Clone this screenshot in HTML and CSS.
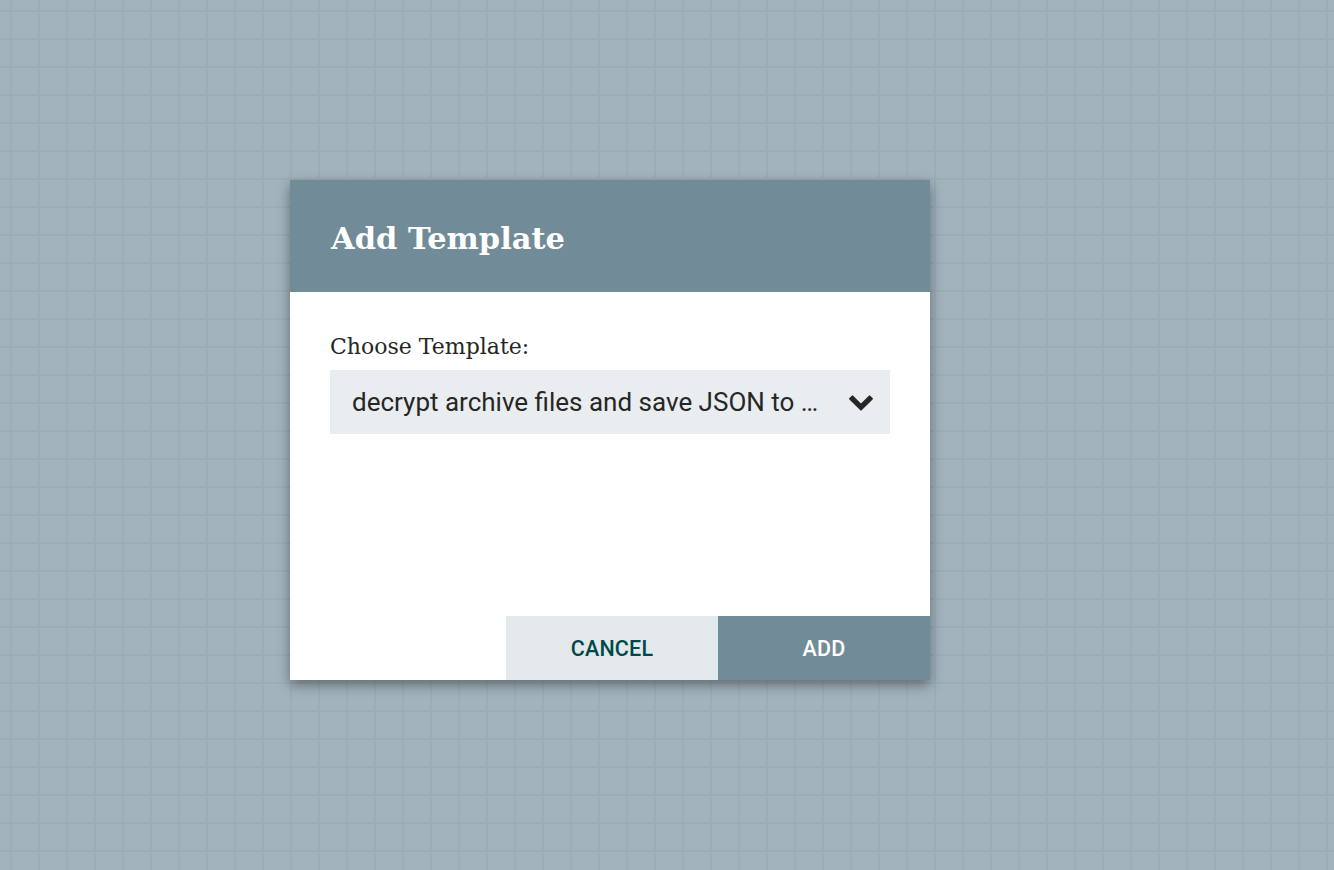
FILE: index.html
```html
<!DOCTYPE html>
<html>
<head>
<meta charset="utf-8">
<link rel="stylesheet" href="styles.css">
</head>
<body>
<div class="canvas">
  <div class="dialog">
    <div class="dialog-header">Add Template</div>
    <div class="dialog-body">
      <div class="label">Choose Template:</div>
      <div class="combo">
        <span class="combo-text">decrypt archive files and save JSON to …</span>
        <svg class="chevron" width="24" height="16" viewBox="83 520 1626 1062"><path fill="#262626" d="M1683 808l-742 741q-19 19-45 19t-45-19l-742-741q-19-19-19-45.5t19-45.5l166-165q19-19 45-19t45 19l531 531 531-531q19-19 45-19t45 19l166 165q19 19 19 45.5t-19 45.5z"/></svg>
      </div>
    </div>
    <div class="dialog-footer">
      <button class="btn btn-cancel">CANCEL</button>
      <button class="btn btn-add">ADD</button>
    </div>
  </div>
</div>
</body>
</html>
```
FILE: styles.css
```css
html, body {
  margin: 0;
  padding: 0;
}
body {
  width: 1334px;
  height: 870px;
  overflow: hidden;
}
.canvas {
  width: 1334px;
  height: 870px;
  background-color: #a2b3bc;
  background-image:
    linear-gradient(to right, #9badb6 2px, transparent 2px),
    linear-gradient(to bottom, #9badb6 2px, transparent 2px);
  background-size: 28px 28px;
  background-position: 10px 10px;
  padding-top: 180px;
  padding-left: 290px;
  box-sizing: border-box;
}
.dialog {
  width: 640px;
  height: 500px;
  background: #ffffff;
  box-shadow: 0 5px 12px rgba(0, 0, 0, 0.4);
  display: flex;
  flex-direction: column;
}
.dialog-header {
  height: 112px;
  background: #728b98;
  color: #ffffff;
  font-family: "DejaVu Serif", serif;
  font-weight: bold;
  font-size: 30.5px;
  padding-left: 41px;
  padding-top: 4px;
  display: flex;
  align-items: center;
  box-sizing: border-box;
}
.dialog-body {
  flex: 1;
  padding: 40px 40px 0 40px;
}
.label {
  font-family: "DejaVu Serif", serif;
  font-size: 22px;
  color: #262626;
  line-height: 30px;
  margin-bottom: 8px;
}
.combo {
  height: 64px;
  background: #e9edef;
  display: flex;
  align-items: center;
  justify-content: space-between;
  padding: 2px 17px 0 22px;
  box-sizing: border-box;
}
.combo-text {
  font-family: Roboto, sans-serif;
  font-size: 26px;
  color: #262626;
  margin-top: -2px;
}
.chevron {
  display: block;
}
.dialog-footer {
  display: flex;
  justify-content: flex-end;
}
.btn {
  width: 212px;
  height: 64px;
  border: none;
  font-family: Roboto, sans-serif;
  font-weight: 500;
  font-size: 21.5px;
  letter-spacing: 0.2px;
}
.btn-cancel {
  background: #e3e8eb;
  color: #004849;
}
.btn-add {
  background: #728b98;
  color: #ffffff;
}
```
